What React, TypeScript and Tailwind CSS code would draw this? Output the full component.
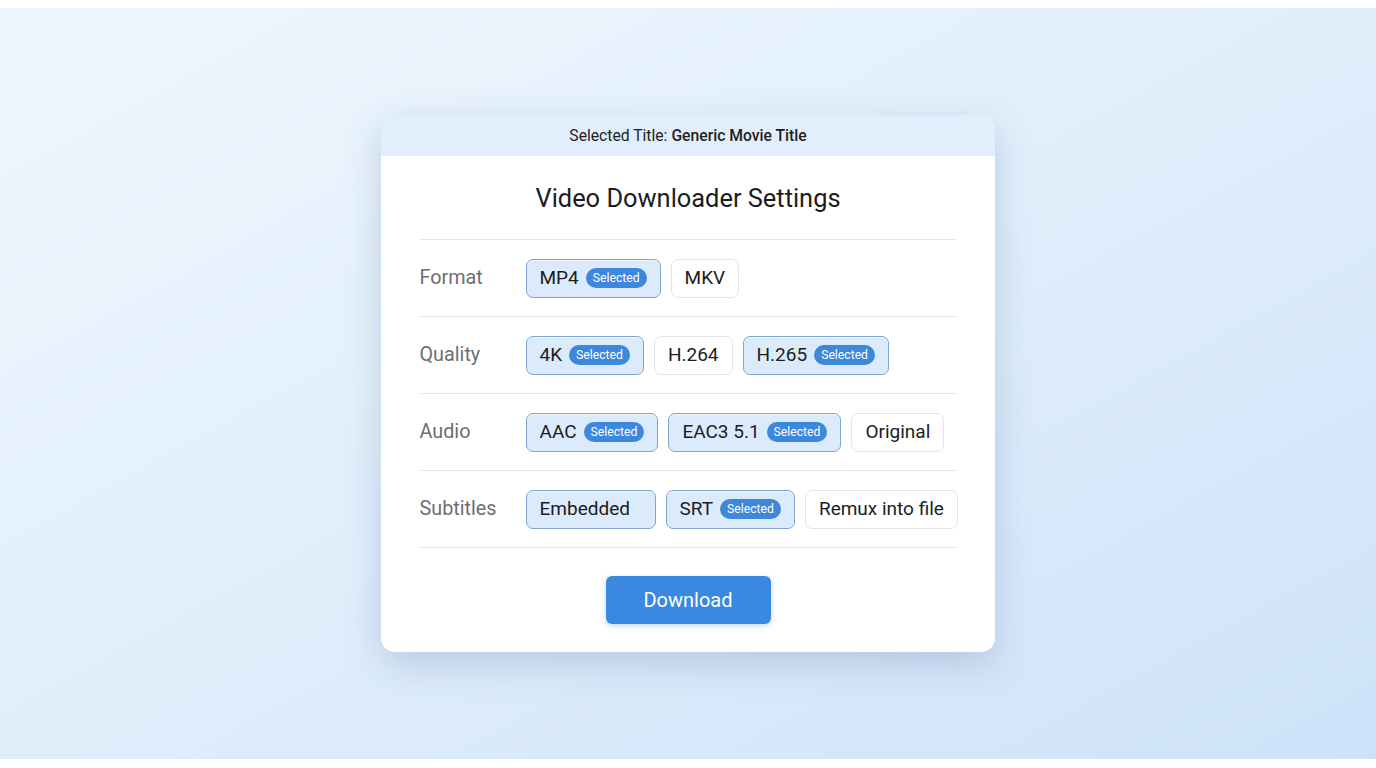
import type { ReactElement } from "react";

type Opt = { label: string; selected?: boolean; badge?: boolean; wide?: boolean };

const rows: { name: string; options: Opt[] }[] = [
  {
    name: "Format",
    options: [
      { label: "MP4", selected: true, badge: true },
      { label: "MKV" },
    ],
  },
  {
    name: "Quality",
    options: [
      { label: "4K", selected: true, badge: true },
      { label: "H.264" },
      { label: "H.265", selected: true, badge: true },
    ],
  },
  {
    name: "Audio",
    options: [
      { label: "AAC", selected: true, badge: true },
      { label: "EAC3 5.1", selected: true, badge: true },
      { label: "Original" },
    ],
  },
  {
    name: "Subtitles",
    options: [
      { label: "Embedded", selected: true, wide: true },
      { label: "SRT", selected: true, badge: true },
      { label: "Remux into file" },
    ],
  },
];

function Chip({ opt }: { opt: Opt }): ReactElement {
  return (
    <button
      type="button"
      className={`flex h-[39px] items-center gap-[7px] whitespace-nowrap rounded-[7px] border px-[13px] text-[19px] text-[#1c1c1e] ${
        opt.selected
          ? "border-[#7ea6cf] bg-[#dcebfb] shadow-[inset_0_1px_0_rgba(255,255,255,0.6)]"
          : "border-[#e2e5ea] bg-white"
      } ${opt.wide ? "min-w-[130px]" : ""}`}
    >
      <span>{opt.label}</span>
      {opt.badge ? (
        <span className="flex h-[20px] items-center rounded-full bg-[#3d87dd] px-[7px] text-[12.2px] text-white">
          Selected
        </span>
      ) : null}
    </button>
  );
}

export default function App(): ReactElement {
  return (
    <div
      className="flex h-[768px] w-full flex-col bg-white"
      style={{ fontFamily: "Roboto, 'Noto Sans', sans-serif" }}
    >
      <div className="h-2 shrink-0 bg-white" />
      <div className="flex flex-1 items-center justify-center bg-gradient-to-br from-[#eff7fe] via-[#e0eefb] to-[#cde2f9]">
        <div className="w-[614px] overflow-hidden rounded-[14px] bg-white shadow-[0_12px_36px_rgba(90,120,160,0.28)]">
          <div className="flex h-[41px] items-center justify-center bg-[#e2eefb] text-[15.7px] text-[#1f1f22]">
            <span>Selected Title:</span>
            <span className="ml-1 font-medium">Generic Movie Title</span>
          </div>
          <div className="flex h-[83px] items-center justify-center whitespace-nowrap pt-[2px] text-[25.4px] text-[#1c1c1e]">
            Video Downloader Settings
          </div>
          <div className="mx-auto w-[537px] border-t border-[#e4e6ea]">
            {rows.map((row) => (
              <div
                key={row.name}
                className="flex h-[77px] items-center border-b border-[#e4e6ea]"
              >
                <div className="w-[106px] shrink-0 text-[19.8px] text-[#6e6e73]">{row.name}</div>
                <div className="flex gap-[10px]">
                  {row.options.map((o) => (
                    <Chip key={o.label} opt={o} />
                  ))}
                </div>
              </div>
            ))}
          </div>
          <div className="flex justify-center pb-[28px] pt-[28px]">
            <button
              type="button"
              className="h-[48px] w-[165px] rounded-[6px] bg-[#3b88e0] text-[20px] text-white shadow-[0_2px_6px_rgba(59,136,224,0.3)]"
            >
              Download
            </button>
          </div>
        </div>
      </div>
      <div className="h-[9px] shrink-0 bg-white" />
    </div>
  );
}
